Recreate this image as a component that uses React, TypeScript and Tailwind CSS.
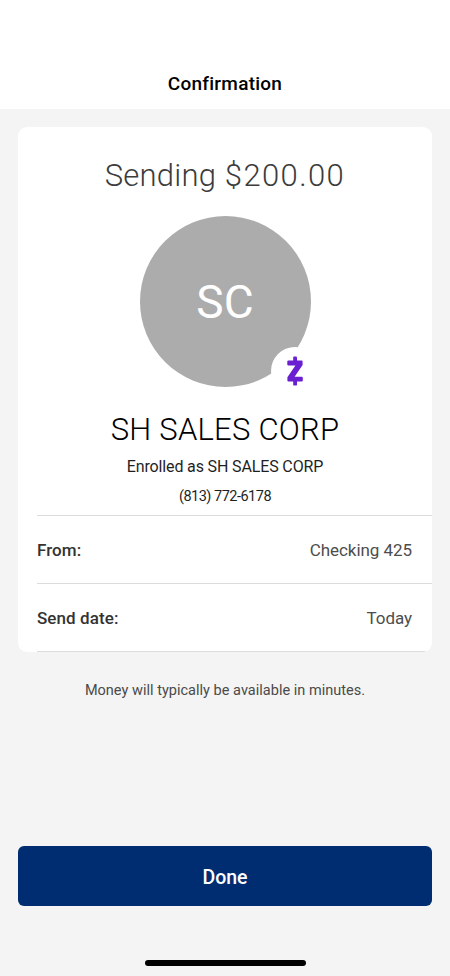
import React from 'react';

const ZelleMark = () => (
  <svg width="16" height="30" viewBox="0 0 16 30" fill="#6a1fd0">
    <rect x="6.2" y="0.4" width="3.8" height="6" rx="1.2" />
    <rect x="6.2" y="23.6" width="3.8" height="6" rx="1.2" />
    <path d="M1.3 4.4H14.6Q15.6 4.4 15.6 5.4V9L7.6 20.8H14.8Q15.8 20.8 15.8 21.8V24.6Q15.8 25.6 14.8 25.6H1.4Q0.4 25.6 0.4 24.6V21.2L8.4 9.4H1.3Q0.3 9.4 0.3 8.4V5.4Q0.3 4.4 1.3 4.4Z" />
  </svg>
);

const DetailRow = ({ label, value }: { label: string; value: string }) => (
  <div className="h-[68px] pt-[2px] pr-5 flex items-center justify-between border-t border-[#dcdcdc] text-[17px] text-[#333333]">
    <span className="font-medium tracking-[0.08px]">{label}</span>
    <span className="text-[#4d4d4d] tracking-[-0.05px]">{value}</span>
  </div>
);

export default function App() {
  return (
    <div className="w-[450px] h-[976px] flex flex-col bg-[#f4f4f4] font-['Roboto','Liberation_Sans',sans-serif] overflow-hidden">
      <header className="h-[109px] pt-[72px] bg-white text-center">
        <h1 className="text-[19px] leading-6 font-medium text-black tracking-[0.25px]">Confirmation</h1>
      </header>

      <main className="flex-1 flex flex-col px-[18px] pt-[18px]">
        <section className="h-[525px] rounded-[9px] bg-white flex flex-col overflow-hidden">
          <div className="flex flex-col items-center whitespace-nowrap">
            <h2 className="mt-[29px] text-[31px] leading-[40px] font-[350] text-[#3c3c3c]">
              <span className="tracking-[0.2px]">Sending </span>
              <span className="ml-px tracking-[1.4px]">$200.00</span>
            </h2>

            <div className="relative mt-[20px] size-[171px] rounded-full bg-[#acacac] flex items-center justify-center">
              <span className="text-[46px] leading-none font-[450] text-white">SC</span>
              <div className="absolute left-[131px] top-[131px] size-12 rounded-full bg-white flex items-center justify-center">
                <ZelleMark />
              </div>
            </div>

            <p className="mt-[23px] text-[31px] leading-[40px] font-[350] text-black tracking-[0.25px]">SH SALES CORP</p>
            <p className="mt-[7px] text-[16px] leading-5 text-[#1f1f1f] tracking-[-0.14px]">Enrolled as SH SALES CORP</p>
            <p className="mt-[10px] text-[14.5px] leading-5 text-[#1f1f1f] tracking-[-0.5px]">(813) 772-6178</p>
          </div>

          <div className="mt-auto pl-[19px]">
            <DetailRow label="From:" value="Checking 425" />
            <DetailRow label="Send date:" value="Today" />
            <div className="h-px mr-[6px] bg-[#dcdcdc]" />
          </div>
        </section>

        <p className="mt-[29px] text-center text-[14.5px] leading-5 text-[#4a4a4a] tracking-[0.02px]">
          Money will typically be available in minutes.
        </p>

        <button className="mt-[145px] h-[60px] pt-[3px] rounded-md bg-[#002d72] text-white text-[19.5px] font-medium">
          Done
        </button>

        <div className="mt-[54px] self-center w-[161px] h-[6px] rounded-full bg-black" />
      </main>
    </div>
  );
}
